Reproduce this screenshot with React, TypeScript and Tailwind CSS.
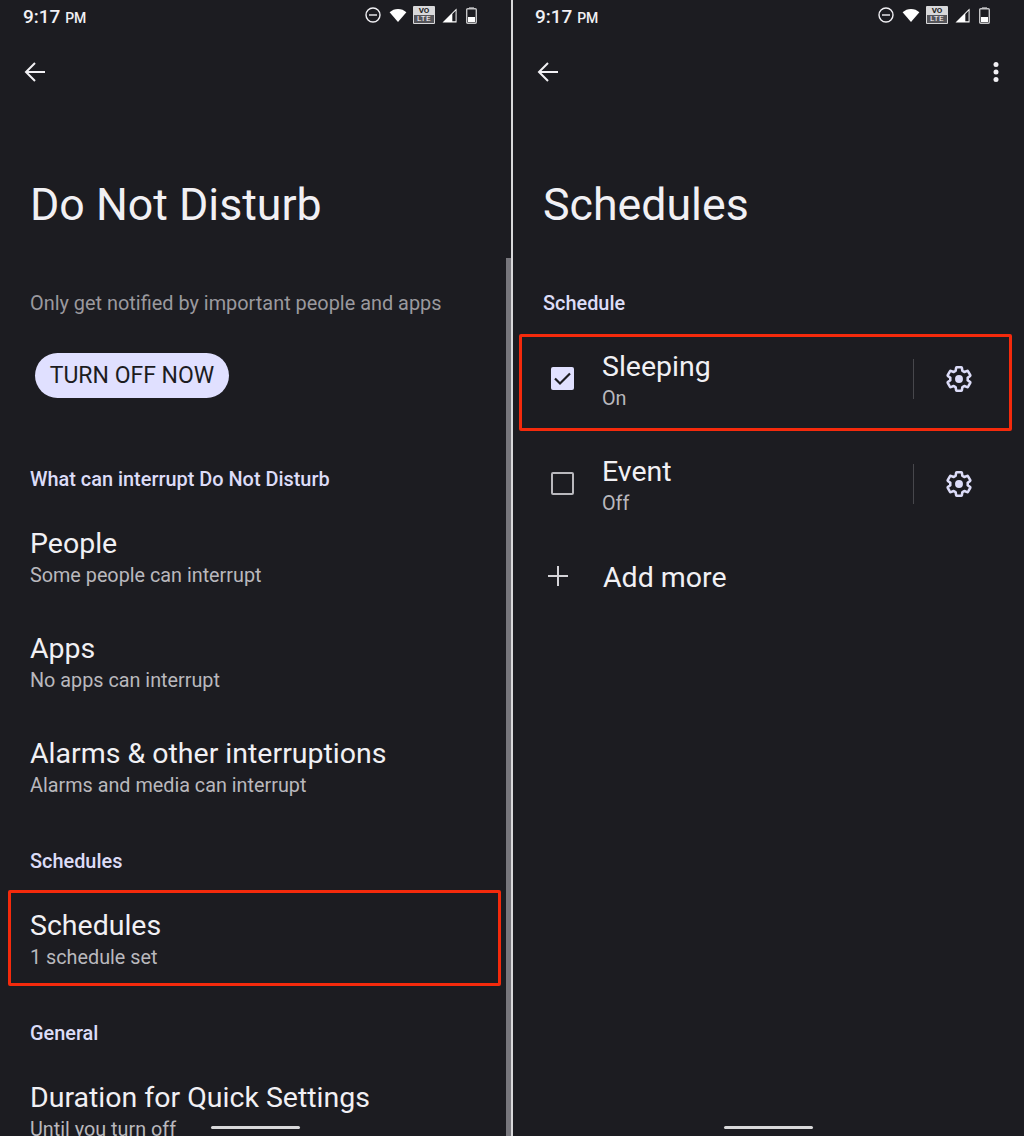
const LILAC = 'text-[#dcdcf8]';

function StatusBar({ x }: { x: string }) {
    return (
        <div className={`h-[30px] flex items-center justify-between ${x}`}>
            <div className="text-[#f1f0f4] text-[19px] font-medium leading-none pt-[2px]">
                9:17 <span className="text-[14px]">PM</span>
            </div>
            <div className="flex items-center text-white">
                <svg width="16" height="16" viewBox="0 0 16 16" fill="none" stroke="#f1f0f4" strokeWidth="1.4">
                    <circle cx="8" cy="8" r="7" />
                    <path d="M4 8h8" />
                </svg>
                <svg width="18" height="14" viewBox="0 0 19 15" fill="#ffffff" className="ml-[8px]">
                    <path d="M9.5 15L0.5 4.6C3 2.2 6 1 9.5 1s6.5 1.200 9 3.600z" />
                </svg>
                <div className="ml-[6px] w-[22px] h-[18px] bg-[#d8d8da] rounded-[1px] flex flex-col items-center overflow-hidden">
                    <div className="h-[9px] text-[8px] leading-[9px] font-bold text-[#1c1c21]">VO</div>
                    <div className="w-[20px] h-[8px] bg-[#55555a] text-[8px] leading-[8px] tracking-[0.5px] text-center text-white">LTE</div>
                </div>
                <svg width="15" height="15" viewBox="0 0 16 16" className="ml-[7px]">
                    <path d="M15.5 0.5V15.5H0.5z" fill="#ffffff" />
                    <path d="M11 6.5V14H14.5V2.8z" fill="#1c1c21" />
                </svg>
                <svg width="11" height="17" viewBox="0 0 11 17" className="ml-[9px]">
                    <rect x="3" y="0" width="5" height="2" fill="#8b8b8f" />
                    <rect x="0.7" y="1.7" width="9.6" height="14.6" rx="1" fill="none" stroke="#c4c4c6" strokeWidth="1.4" />
                    <rect x="2" y="10" width="7" height="5" fill="#ffffff" />
                </svg>
            </div>
        </div>
    );
}

function Back() {
    return (
        <svg width="24" height="24" viewBox="0 0 24 24" fill="none" stroke="#f1f0f4" strokeWidth="2">
            <path d="M22 12H3M12 3l-9 9 9 9" />
        </svg>
    );
}

function Section({ children, className }: { children: string; className: string }) {
    return <div className={`px-[30px] text-[19.9px] font-medium leading-[24px] ${LILAC} ${className}`}>{children}</div>;
}

function Row({ title, sub, boxed }: { title: string; sub: string; boxed?: boolean }) {
    return (
        <div className="relative h-[105px] px-[30px] flex flex-col justify-center">
            {boxed && <div className="absolute left-[8px] right-[10px] top-[3px] bottom-[6px] border-[3px] border-[#f42a0c] rounded-[2px]" />}
            <div className="text-[28.5px] leading-[36px] text-[#f1f0f4]">{title}</div>
            <div className="text-[19.8px] leading-[28px] text-[#b9b8bd]">{sub}</div>
        </div>
    );
}

function Gear() {
    return (
        <svg width="28" height="28" viewBox="0 0 24 24" fill="none" stroke="#dcdcf8" strokeWidth="2.2" strokeLinejoin="round">
            <path d="M19.43 12.98c.04-.32.07-.64.07-.98 0-.34-.03-.66-.07-.98l2.11-1.65c.19-.15.24-.42.12-.64l-2-3.46c-.12-.22-.39-.3-.61-.22l-2.49 1c-.52-.4-1.08-.73-1.69-.98l-.38-2.65C14.46 2.18 14.25 2 14 2h-4c-.25 0-.46.18-.49.42l-.38 2.65c-.61.25-1.17.59-1.69.98l-2.49-1c-.23-.09-.49 0-.61.22l-2 3.46c-.13.22-.07.49.12.64l2.11 1.65c-.04.32-.07.65-.07.98 0 .33.03.66.07.98l-2.11 1.65c-.19.15-.24.42-.12.64l2 3.46c.12.22.39.3.61.22l2.49-1c.52.4 1.08.73 1.69.98l.38 2.65c.03.24.24.42.49.42h4c.25 0 .46-.18.49-.42l.38-2.65c.61-.25 1.17-.59 1.69-.98l2.49 1c.23.09.49 0 .61-.22l2-3.46c.12-.22.07-.49-.12-.64l-2.11-1.65z" />
            <circle cx="12" cy="12" r="3.4" fill="#dcdcf8" stroke="none" />
        </svg>
    );
}

function ScheduleRow({ title, sub, checked, boxed }: { title: string; sub: string; checked: boolean; boxed?: boolean }) {
    return (
        <div className="relative h-[105px] pl-[38px] pr-[51px] flex items-center">
            {boxed && <div className="absolute left-[6px] right-[12px] top-[8px] bottom-[0px] border-[3px] border-[#f42a0c] rounded-[2px]" />}
            {checked ? (
                <div className="w-[23px] h-[23px] rounded-[2px] bg-[#e0e0ff] flex items-center justify-center">
                    <svg width="17" height="17" viewBox="0 0 17 17" fill="none" stroke="#1c1c21" strokeWidth="2.2">
                        <path d="M1 8.500l5 5L16 3.500" />
                    </svg>
                </div>
            ) : (
                <div className="w-[23px] h-[23px] rounded-[2px] border-[2px] border-[#b9b8bd]" />
            )}
            <div className="ml-[28px] flex-1 flex flex-col pt-[5px]">
                <div className="text-[28.5px] leading-[36px] text-[#f1f0f4]">{title}</div>
                <div className="text-[19.8px] leading-[28px] text-[#b9b8bd]">{sub}</div>
            </div>
            <div className="w-px h-[40px] bg-[#47474c]" />
            <div className="ml-[31px] flex">
                <Gear />
            </div>
        </div>
    );
}

export default function App() {
    return (
        <div className="w-[1024px] h-[1136px] flex bg-[#1c1c21] font-['Roboto',sans-serif] overflow-hidden">
            <div className="relative w-[511px] h-full overflow-hidden">
                <StatusBar x="pl-[23px] pr-[34px]" />
                <div className="h-[56px] pl-[23px] flex items-center pt-[28px]">
                    <Back />
                </div>
                <h1 className="mt-[89px] px-[30px] text-[44.7px] leading-[60px] text-[#f1f0f4]">Do Not Disturb</h1>
                <p className="mt-[55px] px-[30px] text-[19.9px] leading-[28px] text-[#9a999e]">Only get notified by important people and apps</p>
                <div className="mt-[35px] ml-[35px] w-[194px] h-[45px] pt-[2px] rounded-full bg-[#e0e0ff] flex items-center justify-center text-[23px] text-[#1c1c21]">
                    TURN OFF NOW
                </div>
                <Section className="mt-[70px] mb-[13px]">What can interrupt Do Not Disturb</Section>
                <Row title="People" sub="Some people can interrupt" />
                <Row title="Apps" sub="No apps can interrupt" />
                <Row title="Alarms & other interruptions" sub="Alarms and media can interrupt" />
                <Section className="mt-[30px] mb-[13px]">Schedules</Section>
                <Row title="Schedules" sub="1 schedule set" boxed />
                <Section className="mt-[30px] mb-[13px]">General</Section>
                <Row title="Duration for Quick Settings" sub="Until you turn off" />
                <div className="absolute right-0 top-[258px] bottom-0 w-[5px] bg-[#77767c]" />
                <div className="absolute left-[211px] bottom-[7px] w-[89px] h-[3px] rounded-full bg-[#d8d8da]" />
            </div>
            <div className="w-[2px] h-full bg-[#d8d8da]" />
            <div className="relative flex-1 h-full overflow-hidden">
                <StatusBar x="pl-[22px] pr-[34px]" />
                <div className="h-[56px] pl-[23px] pr-[16px] flex items-center justify-between pt-[28px]">
                    <Back />
                    <svg width="24" height="24" viewBox="0 0 24 24" fill="#f1f0f4">
                        <circle cx="12" cy="4.500" r="2.500" />
                        <circle cx="12" cy="12" r="2.500" />
                        <circle cx="12" cy="19.500" r="2.500" />
                    </svg>
                </div>
                <h1 className="mt-[89px] pl-[30px] text-[44.7px] leading-[60px] text-[#f1f0f4]">Schedules</h1>
                <Section className="mt-[57px] mb-[10px]">Schedule</Section>
                <ScheduleRow title="Sleeping" sub="On" checked boxed />
                <ScheduleRow title="Event" sub="Off" checked={false} />
                <div className="mt-[21px] h-[40px] pl-[35px] flex items-center">
                    <svg width="20" height="20" viewBox="0 0 20 20" fill="none" stroke="#d4d3d8" strokeWidth="2" className="mb-[2px]">
                        <path d="M10 0v20M0 10h20" />
                    </svg>
                    <span className="ml-[35px] pt-[2px] text-[28.5px] text-[#f1f0f4]">Add more</span>
                </div>
                <div className="absolute left-[211px] bottom-[7px] w-[89px] h-[3px] rounded-full bg-[#d8d8da]" />
            </div>
        </div>
    );
}
